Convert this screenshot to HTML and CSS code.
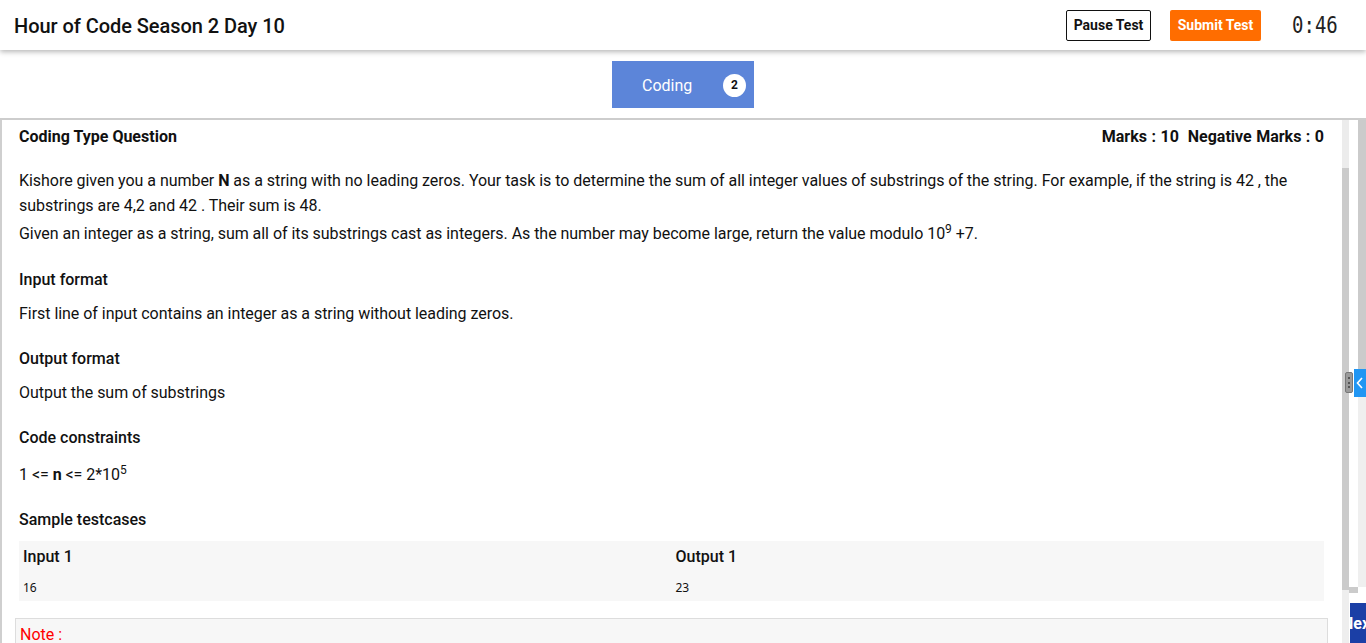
FILE: index.html
```html
<!DOCTYPE html>
<html>
<head>
<meta charset="utf-8">
<link rel="stylesheet" href="styles.css">
</head>
<body>
<header class="topbar">
  <div class="title">Hour of Code Season 2 Day 10</div>
  <div class="actions">
    <button class="btn btn-pause">Pause Test</button>
    <button class="btn btn-submit">Submit Test</button>
    <div class="timer">0:46</div>
  </div>
</header>

<nav class="tabs">
  <div class="tab">
    <span class="tab-label">Coding</span>
    <span class="badge">2</span>
  </div>
</nav>

<main class="main">
  <section class="content">
    <div class="qhead">
      <span class="qtype">Coding Type Question</span>
      <span class="marks">Marks : 10&nbsp; Negative Marks : 0</span>
    </div>

    <div class="desc">
      <p class="line">Kishore given you a number <b>N</b> as a string with no leading zeros. Your task is to determine the sum of all integer values of substrings of the string. For example, if the string is 42 , the substrings are 4,2 and 42 . Their sum is 48.</p>
      <p class="line line-sup">Given an integer as a string, sum all of its substrings cast as integers. As the number may become large, return the value modulo 10<sup>9</sup> +7.</p>
    </div>

    <div class="section section-first">
      <h3 class="sec-title">Input format</h3>
      <p class="sec-body">First line of input contains an integer as a string without leading zeros.</p>
    </div>

    <div class="section">
      <h3 class="sec-title">Output format</h3>
      <p class="sec-body">Output the sum of substrings</p>
    </div>

    <div class="section">
      <h3 class="sec-title">Code constraints</h3>
      <p class="sec-body sec-sup">1 &lt;= <b>n</b> &lt;= 2*10<sup>5</sup></p>
    </div>

    <div class="section">
      <h3 class="sec-title">Sample testcases</h3>
      <div class="cases">
        <div class="case-col">
          <div class="case-head">Input 1</div>
          <div class="case-val">16</div>
        </div>
        <div class="case-col">
          <div class="case-head">Output 1</div>
          <div class="case-val">23</div>
        </div>
      </div>
    </div>

    <div class="note">
      <span class="note-title">Note :</span>
    </div>
  </section>

  <div class="rail rail-inner">
    <div class="rail-thumb"></div>
    <div class="rail-track"></div>
    <div class="rail-end"></div>
  </div>
  <div class="rail-gap">
    <div class="gap-top"></div>
    <div class="gap-block"></div>
  </div>
  <div class="rail rail-outer">
    <div class="outer-top"></div>
    <div class="outer-bottom"></div>
  </div>

  <div class="handle"><i></i><i></i><i></i></div>
  <div class="side-tab">
    <svg width="8" height="12" viewBox="0 0 8 12"><path d="M6 1 L1.5 6 L6 11" fill="none" stroke="#fff" stroke-width="1.6"/></svg>
  </div>
  <div class="next-btn"><span>Next</span></div>
</main>
</body>
</html>
```

FILE: styles.css
```css
* { box-sizing: border-box; }

html, body {
  margin: 0;
  padding: 0;
  height: 643px;
  overflow: hidden;
  background: #fff;
  font-family: Roboto, "Liberation Sans", sans-serif;
  color: #111;
}

.topbar {
  height: 50px;
  display: flex;
  align-items: center;
  justify-content: space-between;
  padding: 2px 29px 0 14px;
  background: #fff;
  box-shadow: 0 2px 5px rgba(0, 0, 0, 0.28);
  position: relative;
  z-index: 2;
}

.title {
  font-size: 20px;
  font-weight: 500;
  color: #111;
  letter-spacing: -0.05px;
}

.actions {
  display: flex;
  align-items: center;
  margin-top: -2px;
}

.btn {
  font-family: Roboto, "Liberation Sans", sans-serif;
  font-size: 14px;
  font-weight: 700;
  height: 31px;
  padding: 0 6px;
  border-radius: 2px;
  cursor: pointer;
}

.btn-pause {
  width: 85px;
  background: #fff;
  border: 1px solid #111;
  color: #111;
}

.btn-submit {
  width: 91px;
  margin-left: 19px;
  background: #ff6d00;
  border: none;
  color: #fff;
}

.timer {
  margin-left: 31px;
  width: 45px;
  font-family: "DejaVu Sans Mono", monospace;
  font-size: 19px;
  color: #222;
  transform: scaleY(1.2);
}

.tabs {
  height: 70px;
  display: flex;
  justify-content: center;
  padding-top: 11px;
  border-bottom: 2px solid #cdcdcd;
}

.tab {
  width: 142px;
  height: 47px;
  background: #5c85d9;
  display: flex;
  align-items: center;
  padding: 1px 8px 0 30px;
  justify-content: space-between;
}

.tab-label {
  color: #fff;
  font-size: 16px;
}

.badge {
  width: 23px;
  height: 23px;
  border-radius: 50%;
  background: #fff;
  color: #111;
  font-size: 12px;
  font-weight: 700;
  display: flex;
  align-items: center;
  justify-content: center;
}

.main {
  position: relative;
  display: flex;
  height: 523px;
}

.content {
  flex: 1;
  border-left: 2px solid #cfcfcf;
  padding: 7px 18px 0 17px;
  overflow: hidden;
}

.qhead {
  display: flex;
  justify-content: space-between;
  font-size: 16px;
  font-weight: 700;
  line-height: 20px;
}

.marks {
  word-spacing: 0.5px;
}

.desc {
  margin-top: 21px;
  font-size: 16px;
  line-height: 25px;
  color: #111;
  letter-spacing: -0.04px;
}

.line {
  margin: 0;
}

.line-sup {
  margin-top: 3px;
}

sup {
  font-size: 12px;
  line-height: 0;
  vertical-align: 6px;
}

.section {
  margin-top: 23px;
}

.section-first {
  margin-top: 24px;
}

.sec-title {
  margin: 0;
  font-size: 16px;
  font-weight: 500;
  line-height: 20px;
}

.sec-body {
  margin: 11px 0 0;
  font-size: 16px;
  line-height: 25px;
  letter-spacing: -0.04px;
}

.sec-sup {
  margin-top: 14px;
}

.cases {
  margin-top: 11px;
  background: #f7f7f7;
  display: grid;
  grid-template-columns: 1fr 1fr;
  height: 60px;
}

.case-col {
  padding: 6px 4px 0;
}

.case-head {
  font-size: 16px;
  font-weight: 500;
  line-height: 20px;
}

.case-val {
  margin-top: 11px;
  font-family: "Noto Sans", "Open Sans", sans-serif;
  font-size: 12px;
  line-height: 20px;
  color: #111;
}

.note {
  margin: 17px -4px 0;
  border: 1px solid #dddddd;
  background: #f7f7f7;
  height: 40px;
  padding: 6px 4px;
}

.note-title {
  color: #ff0000;
  font-size: 16px;
  line-height: 20px;
}

/* right-hand scroll rails */
.rail {
  display: flex;
  flex-direction: column;
}

.rail-inner {
  width: 7px;
}

.rail-thumb {
  height: 48px;
  background: #ececec;
}

.rail-track {
  height: 422px;
  background: #cbcbcb;
}

.rail-end {
  flex: 1;
  background: #eeeeee;
}

.rail-gap {
  width: 9px;
  display: flex;
  flex-direction: column;
}

.gap-top {
  height: 467px;
  background: #fff;
}

.gap-block {
  height: 6px;
  background: #cbcbcb;
}

.rail-outer {
  width: 8px;
}

.outer-top {
  height: 249px;
  background: #cbcbcb;
}

.outer-bottom {
  height: 218px;
  background: #efefef;
}

.handle {
  position: absolute;
  left: 1345px;
  top: 252px;
  width: 8px;
  height: 21px;
  border-radius: 2px;
  background: #9a9a9a;
  border: 1px solid #777;
  display: flex;
  flex-direction: column;
  align-items: center;
  justify-content: space-evenly;
  padding: 2px 0;
}

.handle i {
  display: block;
  width: 2px;
  height: 2px;
  background: #555;
}

.side-tab {
  position: absolute;
  left: 1354px;
  top: 249px;
  width: 12px;
  height: 28px;
  background: #2196f3;
  display: flex;
  align-items: center;
  justify-content: center;
}

.next-btn {
  position: absolute;
  left: 1350px;
  top: 483px;
  width: 16px;
  height: 40px;
  background: #1b3fa6;
  overflow: hidden;
  display: flex;
  align-items: center;
}

.next-btn span {
  margin-left: -8px;
  color: #fff;
  font-size: 16px;
  font-weight: 700;
  white-space: nowrap;
}
```
